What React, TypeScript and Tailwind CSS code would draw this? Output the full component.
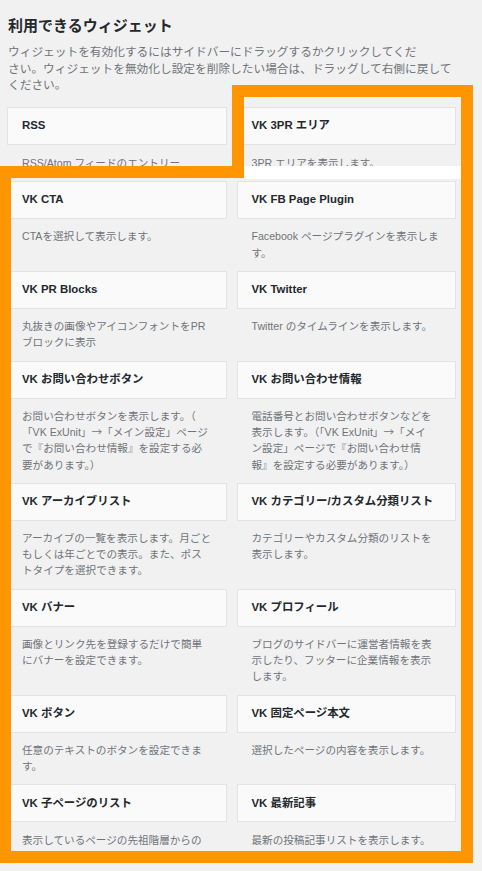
const FONT = '"Liberation Sans", "Noto Sans CJK JP", sans-serif'

interface Widget {
  title: string
  lines: string[]
}

const WIDGETS: Widget[] = [
  { title: 'RSS', lines: ['RSS/Atom フィードのエントリー'] },
  { title: 'VK 3PR エリア', lines: ['3PR エリアを表示します。'] },
  { title: 'VK CTA', lines: ['CTAを選択して表示します。'] },
  { title: 'VK FB Page Plugin', lines: ['Facebook ページプラグインを表示しま', 'す。'] },
  { title: 'VK PR Blocks', lines: ['丸抜きの画像やアイコンフォントをPR', 'ブロックに表示'] },
  { title: 'VK Twitter', lines: ['Twitter のタイムラインを表示します。'] },
  {
    title: 'VK お問い合わせボタン',
    lines: [
      'お問い合わせボタンを表示します。（',
      '「VK ExUnit」→「メイン設定」ページ',
      'で『お問い合わせ情報』を設定する必',
      '要があります。）',
    ],
  },
  {
    title: 'VK お問い合わせ情報',
    lines: [
      '電話番号とお問い合わせボタンなどを',
      '表示します。（「VK ExUnit」→「メイ',
      'ン設定」ページで『お問い合わせ情',
      '報』を設定する必要があります。）',
    ],
  },
  {
    title: 'VK アーカイブリスト',
    lines: ['アーカイブの一覧を表示します。月ごと', 'もしくは年ごとでの表示。また、ポス', 'トタイプを選択できます。'],
  },
  { title: 'VK カテゴリー/カスタム分類リスト', lines: ['カテゴリーやカスタム分類のリストを', '表示します。'] },
  { title: 'VK バナー', lines: ['画像とリンク先を登録するだけで簡単', 'にバナーを設定できます。'] },
  {
    title: 'VK プロフィール',
    lines: ['ブログのサイドバーに運営者情報を表', '示したり、フッターに企業情報を表示', 'します。'],
  },
  { title: 'VK ボタン', lines: ['任意のテキストのボタンを設定できま', 'す。'] },
  { title: 'VK 固定ページ本文', lines: ['選択したページの内容を表示します。'] },
  { title: 'VK 子ページのリスト', lines: ['表示しているページの先祖階層からの', '子ページのリストを表示します。'] },
  { title: 'VK 最新記事', lines: ['最新の投稿記事リストを表示します。'] },
]

// the arrow is drawn full-width by the CJK font, as in the original admin screen
const Line = ({ text }: { text: string }) => {
  const parts = text.split('→')
  return (
    <div>
      {parts.map((p, i) => (
        <span key={i}>
          {i > 0 && <span className="font-['Noto_Sans_CJK_JP']">→</span>}
          {p}
        </span>
      ))}
    </div>
  )
}

const WidgetItem = ({ title, lines }: Widget) => (
  <div className="min-w-0">
    <div className="h-[38px] flex items-center px-[14px] bg-[#fafafa] border border-[#e3e3e3]">
      <span className="text-[11.4px] font-bold text-[#23282d] whitespace-nowrap">{title}</span>
    </div>
    <div className="pt-[9.7px] pb-[10px] px-[15px] text-[10.6px] leading-[16.1px] text-[#6f7479] whitespace-nowrap">
      {lines.map((l, i) => (
        <Line key={i} text={l} />
      ))}
    </div>
  </div>
)

export default function App() {
  return (
    <div className="relative w-[482px] h-[871px] overflow-hidden bg-[#f1f1f1]" style={{ fontFamily: FONT }}>
      <div className="pt-[16px] pl-[8px]">
        <h2 className="text-[15px] leading-[20px] font-bold text-[#23282d]">利用できるウィジェット</h2>
        <div className="mt-[8px] text-[11.7px] leading-[16.5px] text-[#6f7479] whitespace-nowrap">
          <div>ウィジェットを有効化するにはサイドバーにドラッグするかクリックしてくだ</div>
          <div>さい。ウィジェットを無効化し設定を削除したい場合は、ドラッグして右側に戻して</div>
          <div>ください。</div>
        </div>
      </div>

      <div className="mt-[13.5px] ml-[7px] w-[449px] grid grid-cols-2 gap-x-[10px]">
        {WIDGETS.map(w => (
          <WidgetItem key={w.title} {...w} />
        ))}
      </div>

      {/* orange highlight annotation drawn over the screen */}
      <div className="absolute left-[244px] top-[166px] w-[218px] h-[13px] bg-white" />
      <div className="absolute left-[232px] top-[85px] w-[241px] h-[12px] bg-[#ff9500]" />
      <div className="absolute left-[232px] top-[85px] w-[12px] h-[93px] bg-[#ff9500]" />
      <div className="absolute left-[461px] top-[85px] w-[12px] h-[778px] bg-[#ff9500]" />
      <div className="absolute left-0 top-[166px] w-[244px] h-[12px] bg-[#ff9500]" />
      <div className="absolute left-0 top-[166px] w-[11px] h-[697px] bg-[#ff9500]" />
      <div className="absolute left-0 top-[851px] w-[473px] h-[12px] bg-[#ff9500]" />
    </div>
  )
}
